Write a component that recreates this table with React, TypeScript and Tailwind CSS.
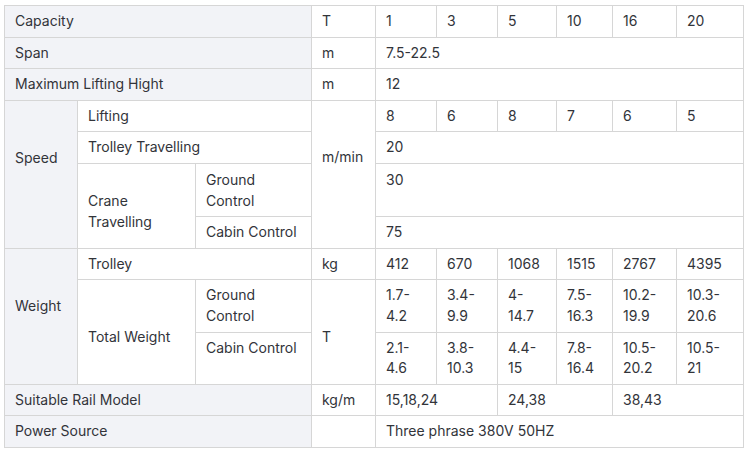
const head = "bg-[#f2f3f7]";
const cell = "border border-[#d6d6d6] px-[10px] pt-[5px] pb-[5px] align-top text-left font-normal";

const capacities = ["1", "3", "5", "10", "16", "20"];
const lifting = ["8", "6", "8", "7", "6", "5"];
const trolley = ["412", "670", "1068", "1515", "2767", "4395"];
const ground = [["1.7-", "4.2"], ["3.4-", "9.9"], ["4-", "14.7"], ["7.5-", "16.3"], ["10.2-", "19.9"], ["10.3-", "20.6"]];
const cabin = [["2.1-", "4.6"], ["3.8-", "10.3"], ["4.4-", "15"], ["7.8-", "16.4"], ["10.5-", "20.2"], ["10.5-", "21"]];

function Two({ a, b }: { a: string; b: string }) {
  return (
    <>
      {a}
      <br />
      {b}
    </>
  );
}

export default function App() {
  return (
    <div className="bg-white w-[750px] h-[453px] pl-[4px] pt-[5px]">
      <table
        className="w-[740px] table-fixed border-collapse text-[14px] leading-[20.6px] text-[#32343a] whitespace-nowrap"
        style={{ fontFamily: "Inter, 'Noto Sans', sans-serif" }}
      >
        <colgroup>
          <col className="w-[73px]" />
          <col className="w-[118px]" />
          <col className="w-[116px]" />
          <col className="w-[64px]" />
          <col className="w-[61px]" />
          <col className="w-[61px]" />
          <col className="w-[59px]" />
          <col className="w-[56px]" />
          <col className="w-[64px]" />
          <col className="w-[67px]" />
        </colgroup>
        <tbody>
          <tr>
            <td colSpan={3} className={`${cell} ${head}`}>Capacity</td>
            <td className={cell}>T</td>
            {capacities.map((c, i) => (
              <td key={i} className={cell}>{c}</td>
            ))}
          </tr>
          <tr>
            <td colSpan={3} className={`${cell} ${head}`}>Span</td>
            <td className={cell}>m</td>
            <td colSpan={6} className={cell}>7.5-22.5</td>
          </tr>
          <tr>
            <td colSpan={3} className={`${cell} ${head}`}>Maximum Lifting Hight</td>
            <td className={cell}>m</td>
            <td colSpan={6} className={cell}>12</td>
          </tr>

          {/* Speed */}
          <tr>
            <td rowSpan={4} className={`${cell} ${head} !pt-[47px]`}>Speed</td>
            <td colSpan={2} className={cell}>Lifting</td>
            <td rowSpan={4} className={`${cell} !pt-[46px]`}>m/min</td>
            {lifting.map((c, i) => (
              <td key={i} className={cell}>{c}</td>
            ))}
          </tr>
          <tr>
            <td colSpan={2} className={cell}>Trolley Travelling</td>
            <td colSpan={6} className={cell}>20</td>
          </tr>
          <tr>
            <td rowSpan={2} className={`${cell} !pt-[27px]`}>
              <Two a="Crane" b="Travelling" />
            </td>
            <td className={`${cell} !pt-[6px]`}>
              <Two a="Ground" b="Control" />
            </td>
            <td colSpan={6} className={`${cell} !pt-[6px]`}>30</td>
          </tr>
          <tr>
            <td className={cell}>Cabin Control</td>
            <td colSpan={6} className={cell}>75</td>
          </tr>

          {/* Weight */}
          <tr>
            <td rowSpan={3} className={`${cell} ${head} !pt-[47px]`}>Weight</td>
            <td colSpan={2} className={cell}>Trolley</td>
            <td className={cell}>kg</td>
            {trolley.map((c, i) => (
              <td key={i} className={cell}>{c}</td>
            ))}
          </tr>
          <tr>
            <td rowSpan={2} className={`${cell} !pt-[47px]`}>Total Weight</td>
            <td className={cell}>
              <Two a="Ground" b="Control" />
            </td>
            <td rowSpan={2} className={`${cell} !pt-[47px]`}>T</td>
            {ground.map(([a, b], i) => (
              <td key={i} className={cell}>
                <Two a={a} b={b} />
              </td>
            ))}
          </tr>
          <tr>
            <td className={cell}>Cabin Control</td>
            {cabin.map(([a, b], i) => (
              <td key={i} className={cell}>
                <Two a={a} b={b} />
              </td>
            ))}
          </tr>

          <tr>
            <td colSpan={3} className={`${cell} ${head}`}>Suitable Rail Model</td>
            <td className={cell}>kg/m</td>
            <td colSpan={2} className={cell}>15,18,24</td>
            <td colSpan={2} className={cell}>24,38</td>
            <td colSpan={2} className={cell}>38,43</td>
          </tr>
          <tr>
            <td colSpan={3} className={`${cell} ${head}`}>Power Source</td>
            <td className={cell}></td>
            <td colSpan={6} className={cell}>Three phrase 380V 50HZ</td>
          </tr>
        </tbody>
      </table>
    </div>
  );
}
